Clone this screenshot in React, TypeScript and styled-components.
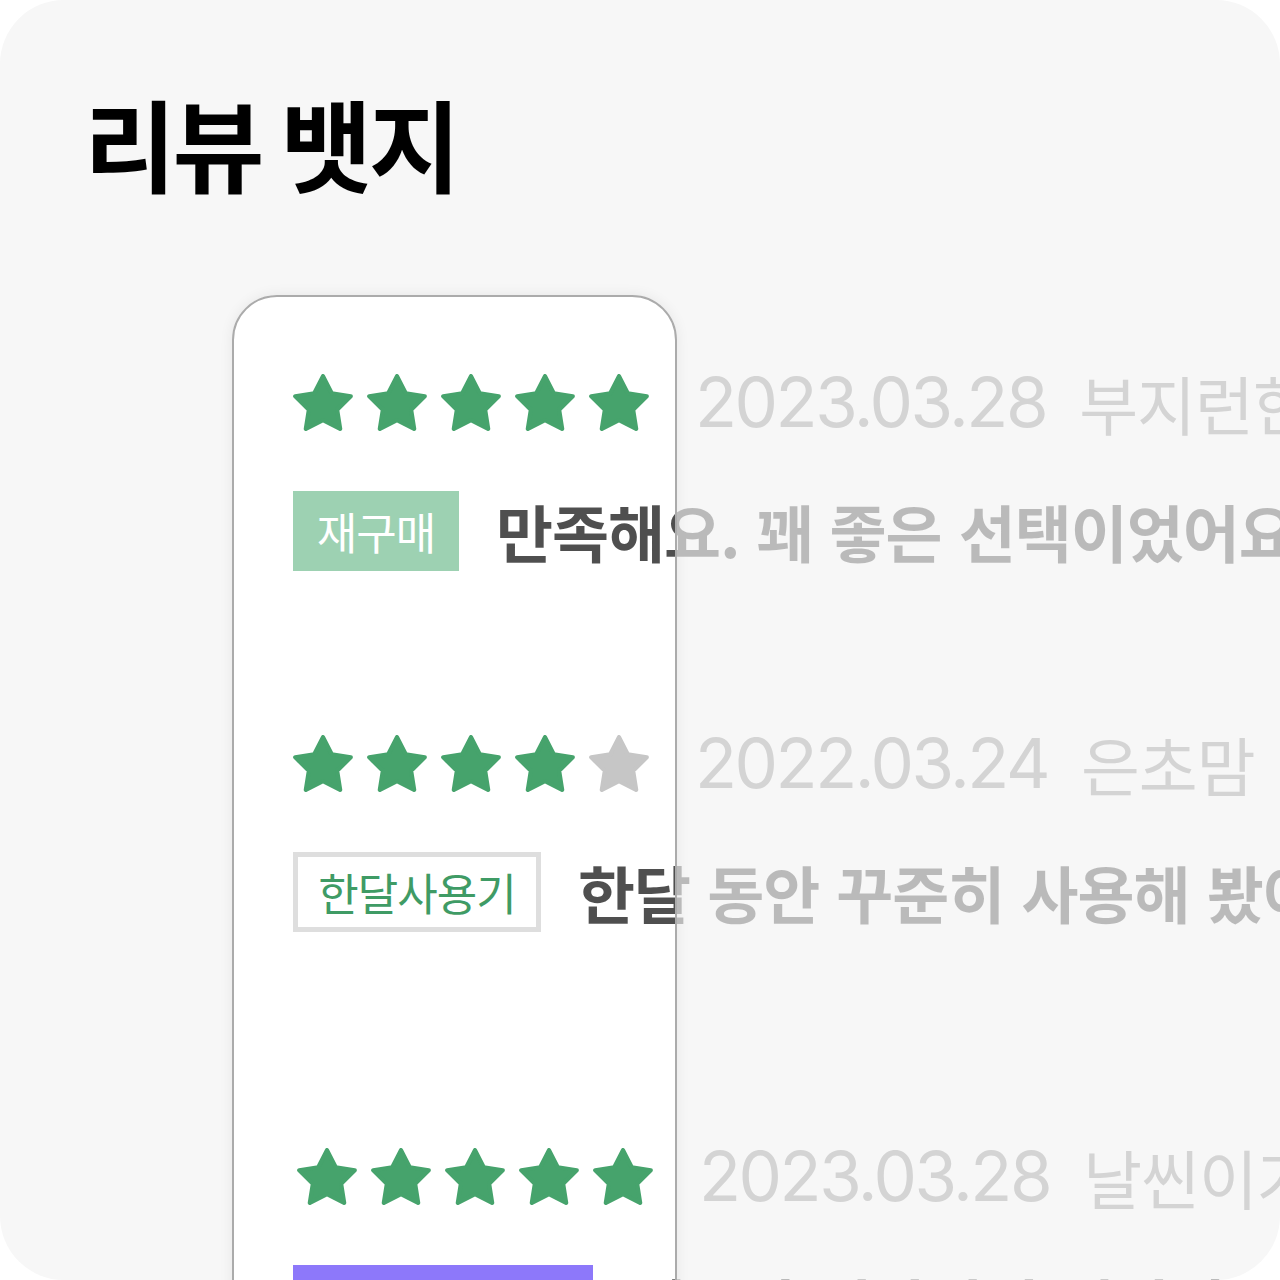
import React from "react";
import styled, { createGlobalStyle } from "styled-components";

const Global = createGlobalStyle`
  html, body { margin: 0; padding: 0; background: #ffffff; }
  body { font-family: "Noto Sans CJK KR", "Noto Sans", sans-serif; }
`;

const Frame = styled.div`
  width: 1280px;
  height: 1280px;
  box-sizing: border-box;
  background: #f7f7f7;
  border-radius: 64px;
  overflow: hidden;
  display: flex;
  flex-direction: column;
`;

const Title = styled.h1`
  margin: 0;
  padding: 92px 0 0 84px;
  font-family: "Noto Sans CJK KR", sans-serif;
  font-weight: 700;
  font-size: 100px;
  line-height: 100px;
  letter-spacing: -3.5px;
  color: #000000;
`;

const Card = styled.div`
  position: relative;
  margin: 103px 0 0 232px;
  width: 445px;
  flex: 1 0 auto;
  box-sizing: border-box;
  background: #ffffff;
  border-radius: 45px 45px 0 0;
  box-shadow: 0 0 14px rgba(0, 0, 0, 0.07);
  padding: 78px 0 0 61px;
  display: flex;
  flex-direction: column;
  &::after {
    content: "";
    position: absolute;
    inset: 0 0 -60px 0;
    border: 2px solid #ababab;
    border-radius: 45px 45px 0 0;
    pointer-events: none;
    z-index: 2;
  }
`;

const Review = styled.section<{ $top: number }>`
  margin-top: ${(p) => p.$top}px;
  display: flex;
  flex-direction: column;
  gap: 60px;
`;

const MetaRow = styled.div<{ $indent: number }>`
  display: flex;
  align-items: center;
  width: max-content;
  white-space: nowrap;
  height: 58px;
  padding-left: ${(p) => p.$indent}px;
`;

const Stars = styled.div`
  display: flex;
  gap: 14px;
`;

const StarSvg = styled.svg`
  display: block;
  width: 60px;
  height: 57px;
`;

const DateText = styled.span`
  margin-left: 46px;
  font-family: Inter, "Noto Sans", sans-serif;
  font-weight: 400;
  font-size: 69px;
  letter-spacing: -2.5px;
  line-height: 1;
  color: #d4d4d4;
`;

const Nick = styled.span`
  margin-left: 33px;
  font-family: "Noto Sans CJK KR", sans-serif;
  font-weight: 400;
  font-size: 64px;
  letter-spacing: -1px;
  line-height: 1;
  color: #d4d4d4;
`;

const BodyRow = styled.div`
  display: flex;
  align-items: center;
  width: max-content;
  white-space: nowrap;
  gap: 37px;
`;

const badgeStyles = {
  solid: "background: #9dd1b2; color: #ffffff; border: 0;",
  outline: "background: #ffffff; color: #3f9b65; border: 5px solid #dedede;",
  purple: "background: #8d78fa; color: #ffffff; border: 0;",
} as const;

const Badge = styled.span<{ $variant: keyof typeof badgeStyles; $width: number }>`
  box-sizing: border-box;
  display: flex;
  align-items: center;
  justify-content: center;
  width: ${(p) => p.$width}px;
  height: 80px;
  font-family: "Noto Sans CJK KR", sans-serif;
  font-weight: 400;
  font-size: 44px;
  letter-spacing: -1px;
  ${(p) => badgeStyles[p.$variant]}
`;

const Comment = styled.span`
  font-family: "Noto Sans CJK KR", sans-serif;
  font-weight: 700;
  font-size: 62px;
  letter-spacing: -1px;
  word-spacing: 4px;
  line-height: 80px;
  background: linear-gradient(90deg, #4f4f4f 0, #4f4f4f 677px, #bababa 677px, #bababa 100%);
  background-attachment: fixed;
  -webkit-background-clip: text;
  background-clip: text;
  color: transparent;
  position: relative;
  z-index: 1;
`;

const starPoints = (() => {
  const cx = 12;
  const cy = 12.8;
  const R = 11;
  const r = 5.6;
  const pts: string[] = [];
  for (let i = 0; i < 10; i++) {
    const a = ((-90 + i * 36) * Math.PI) / 180;
    const rad = i % 2 === 0 ? R : r;
    pts.push(`${(cx + rad * Math.cos(a)).toFixed(2)},${(cy + rad * Math.sin(a)).toFixed(2)}`);
  }
  return pts.join(" ");
})();

const Star = ({ on }: { on: boolean }) => {
  const c = on ? "#46a36c" : "#c6c6c6";
  return (
    <StarSvg viewBox="0.74 1 22.52 21.5" aria-hidden>
      <polygon points={starPoints} fill={c} stroke={c} strokeWidth={1.6} strokeLinejoin="round" />
    </StarSvg>
  );
};

type Item = {
  rating: number;
  date: string;
  nick: string;
  badge: string;
  variant: keyof typeof badgeStyles;
  badgeWidth: number;
  text: string;
  top: number;
  indent: number;
};

const items: Item[] = [
  {
    rating: 5,
    date: "2023.03.28",
    nick: "부지런한개미",
    badge: "재구매",
    variant: "solid",
    badgeWidth: 166,
    text: "만족해요. 꽤 좋은 선택이었어요.",
    top: 0,
    indent: 0,
  },
  {
    rating: 4,
    date: "2022.03.24",
    nick: "은초맘",
    badge: "한달사용기",
    variant: "outline",
    badgeWidth: 248,
    text: "한달 동안 꾸준히 사용해 봤어요",
    top: 163,
    indent: 0,
  },
  {
    rating: 5,
    date: "2023.03.28",
    nick: "날씬이가되고싶어",
    badge: "",
    variant: "purple",
    badgeWidth: 300,
    text: "피부가 정말 촉촉해졌어요",
    top: 215,
    indent: 4,
  },
];

export default function App() {
  return (
    <>
      <Global />
      <Frame>
        <Title>리뷰 뱃지</Title>
        <Card>
          {items.map((it, idx) => (
            <Review key={idx} $top={it.top}>
              <MetaRow $indent={it.indent}>
                <Stars>
                  {[0, 1, 2, 3, 4].map((i) => (
                    <Star key={i} on={i < it.rating} />
                  ))}
                </Stars>
                <DateText>{it.date}</DateText>
                <Nick>{it.nick}</Nick>
              </MetaRow>
              <BodyRow>
                <Badge $variant={it.variant} $width={it.badgeWidth}>
                  {it.badge}
                </Badge>
                <Comment>{it.text}</Comment>
              </BodyRow>
            </Review>
          ))}
        </Card>
      </Frame>
    </>
  );
}
